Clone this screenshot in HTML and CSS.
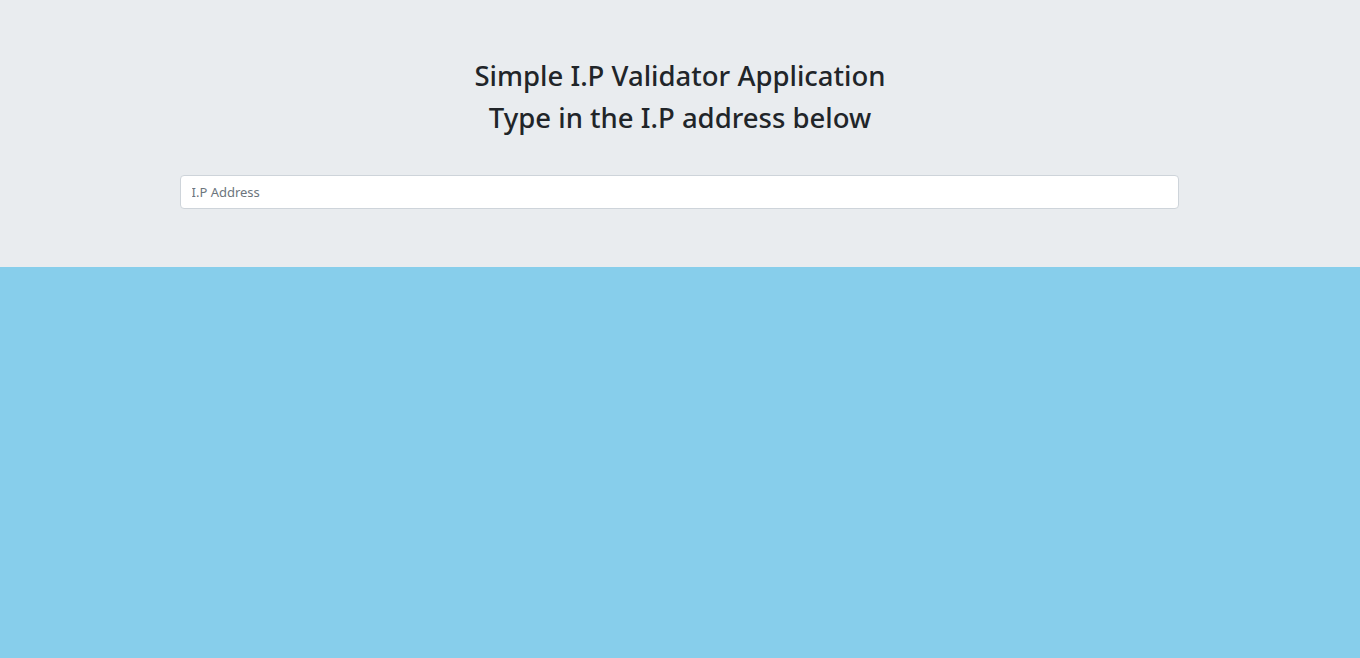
FILE: index.html
```html
<!DOCTYPE html>
<html lang="en">
<head>
<meta charset="utf-8">
<title>Simple I.P Validator</title>
<link rel="stylesheet" href="styles.css">
</head>
<body>
<div class="jumbotron">
  <h3 class="title">Simple I.P Validator Application</h3>
  <h3 class="title">Type in the I.P address below</h3>
  <div class="field">
    <input class="form-control" type="text" placeholder="I.P Address">
  </div>
</div>
</body>
</html>
```
FILE: styles.css
```css
html, body {
  margin: 0;
  padding: 0;
}
body {
  background: #87ceeb;
  font-family: "Noto Sans", "Open Sans", sans-serif;
  color: #212529;
  min-height: 658px;
}
.jumbotron {
  background: #e9ecef;
  padding: 59px 0 58px;
  text-align: center;
}
.title {
  margin: 0 0 8px;
  font-size: 27.5px;
  line-height: 33.6px;
  font-weight: 500;
  color: #212529;
}
.field {
  display: flex;
  justify-content: center;
  margin-top: 41px;
}
.form-control {
  box-sizing: border-box;
  width: 999px;
  height: 34px;
  margin-right: 2px;
  padding: 0 11px;
  font-family: "Noto Sans", "Open Sans", sans-serif;
  font-size: 13px;
  color: #495057;
  background: #fff;
  border: 1px solid #ced4da;
  border-radius: 4px;
  outline: none;
}
.form-control::placeholder {
  color: #6c757d;
  opacity: 1;
}
```
